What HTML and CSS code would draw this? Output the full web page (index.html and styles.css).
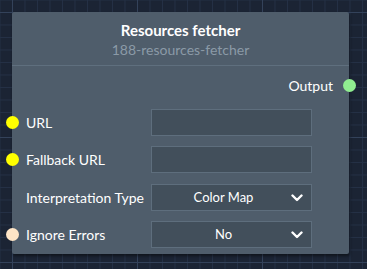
FILE: index.html
```html
<!DOCTYPE html>
<html>
<head>
<meta charset="utf-8">
<link rel="stylesheet" href="styles.css">
</head>
<body>
<div class="node">
  <div class="node-header">
    <div class="title">Resources fetcher</div>
    <div class="subtitle">188-resources-fetcher</div>
  </div>
  <div class="node-body">
    <div class="output-row">
      <span class="output-label">Output</span>
      <span class="dot dot-out"></span>
    </div>
    <div class="rows">
      <div class="row">
        <span class="dot dot-in dot-yellow"></span>
        <span class="label">URL</span>
        <div class="field"></div>
      </div>
      <div class="row">
        <span class="dot dot-in dot-yellow"></span>
        <span class="label">Fallback URL</span>
        <div class="field"></div>
      </div>
      <div class="row">
        <span class="label">Interpretation Type</span>
        <div class="field select"><span class="select-text">Color Map</span><svg class="chev" width="12" height="8" viewBox="0 0 12 8"><path d="M1.5 1.5 L6 6 L10.5 1.5" fill="none" stroke="#fff" stroke-width="2.4" stroke-linecap="round" stroke-linejoin="round"/></svg></div>
      </div>
      <div class="row">
        <span class="dot dot-in dot-cream"></span>
        <span class="label">Ignore Errors</span>
        <div class="field select"><span class="select-text">No</span><svg class="chev" width="12" height="8" viewBox="0 0 12 8"><path d="M1.5 1.5 L6 6 L10.5 1.5" fill="none" stroke="#fff" stroke-width="2.4" stroke-linecap="round" stroke-linejoin="round"/></svg></div>
      </div>
    </div>
  </div>
</div>
</body>
</html>
```

FILE: styles.css
```css
html, body {
  margin: 0;
  padding: 0;
}
body {
  width: 367px;
  height: 269px;
  overflow: hidden;
  box-sizing: border-box;
  padding: 12px 0 0 12px;
  font-family: "Lato", "Noto Sans", sans-serif;
  color: #fff;
  background-color: #1b2434;
  background-image:
    linear-gradient(to right, #33425a 1px, transparent 1px),
    linear-gradient(to bottom, #33425a 1px, transparent 1px),
    linear-gradient(to right, #243045 1px, transparent 1px),
    linear-gradient(to bottom, #243045 1px, transparent 1px);
  background-size: 125px 125px, 125px 125px, 12.5px 12.5px, 12.5px 12.5px;
  background-position: 12px 12px, 12px 12px, 12px 12px, 12px 12px;
}
.node {
  width: 337px;
  height: 242px;
  background: #4f5d6b;
  border-radius: 2px;
  box-shadow: 1px 2px 3px rgba(0, 0, 0, 0.45);
  display: flex;
  flex-direction: column;
}
.node-header {
  padding: 8px 0 5px;
  border-bottom: 1px solid #5f6f7e;
  text-align: center;
}
.title {
  font-size: 15px;
  font-weight: 700;
  line-height: 20px;
}
.subtitle {
  font-size: 14px;
  line-height: 20px;
  color: #8b9aa7;
}
.node-body {
  padding-top: 9px;
}
.output-row {
  display: flex;
  justify-content: flex-end;
  align-items: center;
  height: 20px;
  position: relative;
  padding-right: 16px;
}
.output-label {
  font-size: 14px;
}
.dot {
  position: absolute;
  width: 13px;
  height: 13px;
  border-radius: 50%;
  top: 50%;
  margin-top: -6.5px;
}
.dot-out {
  right: -7px;
  background: #90ee90;
}
.dot-in {
  left: -6px;
}
.dot-yellow { background: #ffff00; }
.dot-cream { background: #fee5c6; }
.rows {
  margin-top: 14px;
  display: flex;
  flex-direction: column;
  gap: 10.3px;
}
.row {
  position: relative;
  display: grid;
  grid-template-columns: 125px 161px;
  align-items: center;
  padding-left: 14px;
  height: 27px;
}
.label {
  font-size: 14px;
}
.field {
  box-sizing: border-box;
  height: 27px;
  background: #424f5b;
  border: 1px solid #5e6e7d;
}
.select {
  display: flex;
  align-items: center;
  position: relative;
}
.select-text {
  flex: 1;
  text-align: center;
  font-size: 13px;
  padding-right: 16px;
}
.chev {
  position: absolute;
  right: 8px;
  top: 9px;
}
```
